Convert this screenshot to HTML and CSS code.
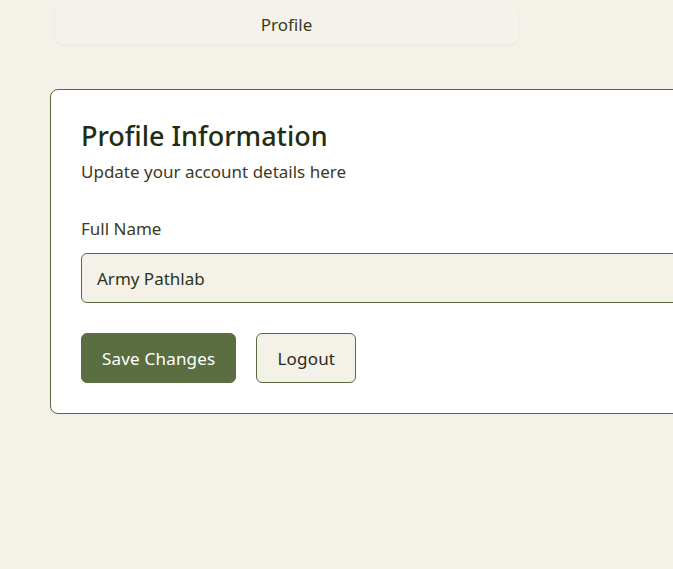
FILE: index.html
```html
<!DOCTYPE html>
<html lang="en">
<head>
<meta charset="utf-8">
<title>Profile</title>
<link rel="stylesheet" href="styles.css">
</head>
<body>
<div class="page">
  <nav class="tabs">
    <div class="tab">Profile</div>
  </nav>
  <section class="card">
    <h1 class="title">Profile Information</h1>
    <p class="subtitle">Update your account details here</p>
    <label class="label" for="fullname">Full Name</label>
    <input class="input" id="fullname" type="text" value="Army Pathlab">
    <div class="actions">
      <button class="btn btn-primary">Save Changes</button>
      <button class="btn btn-outline">Logout</button>
    </div>
  </section>
</div>
</body>
</html>
```
FILE: styles.css
```css
html, body {
  margin: 0;
  padding: 0;
  overflow: hidden;
  background: #f4f1e9;
}
body {
  font-family: "Noto Sans", "Open Sans", sans-serif;
  color: #2c3a1c;
}
.page {
  padding: 4px 0 0 50px;
  width: 800px;
}
.tabs {
  padding-left: 5px;
  width: 463px;
}
.tab {
  height: 40px;
  padding-top: 1px;
  box-sizing: border-box;
  display: flex;
  align-items: center;
  justify-content: center;
  background: #f5f2eb;
  border-radius: 8px;
  box-shadow: 0 1px 3px rgba(0,0,0,0.06);
  font-size: 17px;
  color: #3a3a20;
}
.card {
  margin-top: 45px;
  background: #ffffff;
  border: 1px solid #5b6b40;
  border-radius: 8px;
  padding: 28px 30px 30px 30px;
  width: 700px;
}
.title {
  margin: 0;
  font-size: 27px;
  font-weight: 500;
  line-height: 36px;
  color: #1f2e12;
}
.subtitle {
  margin: 6px 0 0;
  font-size: 17px;
  line-height: 24px;
  color: #3d3a20;
}
.label {
  display: block;
  margin-top: 33px;
  font-size: 17px;
  line-height: 24px;
  color: #3d3a20;
}
.input {
  display: block;
  box-sizing: border-box;
  margin-top: 12px;
  width: 100%;
  height: 50px;
  padding: 0 15px;
  border: 1px solid #5b6b40;
  border-radius: 6px;
  background: #f4f1e9;
  font-family: inherit;
  font-size: 17px;
  color: #2a3519;
}
.actions {
  display: flex;
  gap: 20px;
  margin-top: 30px;
}
.btn {
  height: 50px;
  padding: 0 20px;
  border-radius: 6px;
  font-family: inherit;
  font-size: 17px;
  letter-spacing: 0.2px;
}
.btn-primary {
  background: #5a6e42;
  border: 1px solid #5a6e42;
  color: #ffffff;
}
.btn-outline {
  background: #f4f1e9;
  border: 1px solid #5b6b40;
  color: #2a2a18;
}
```
